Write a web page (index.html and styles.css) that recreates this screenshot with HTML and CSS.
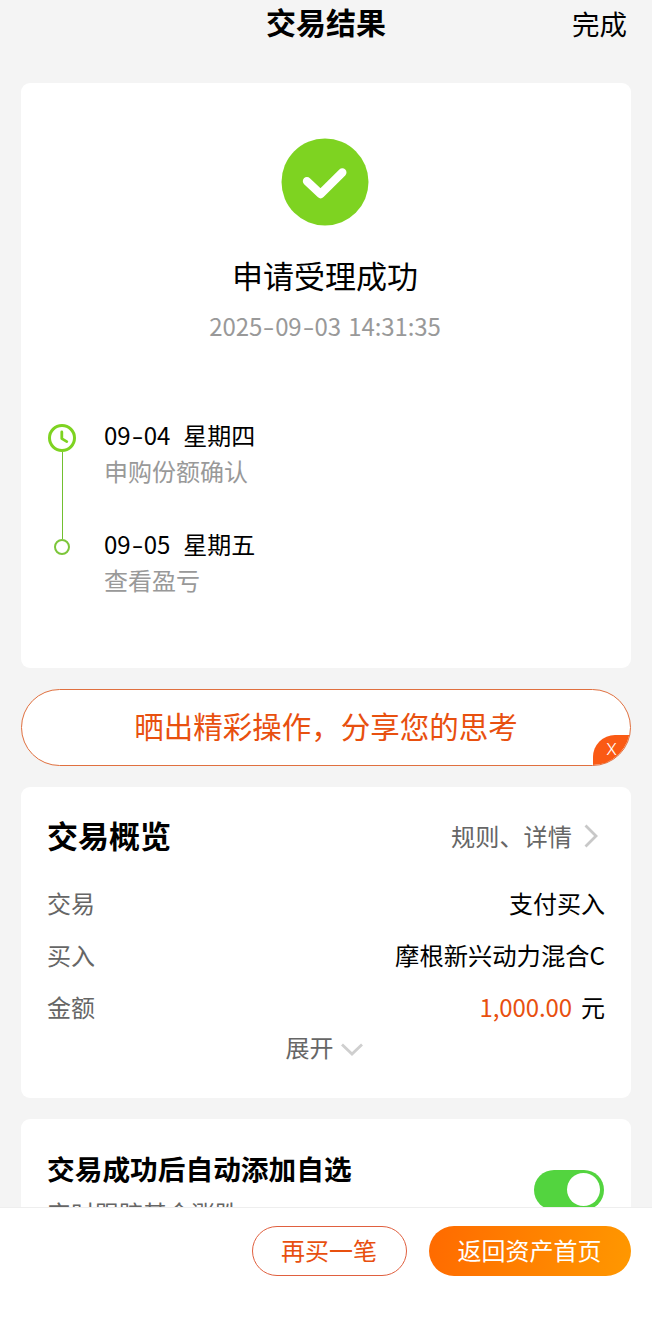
FILE: index.html
```html
<!DOCTYPE html>
<html lang="zh-CN">
<head>
    <meta charset="UTF-8">
    <meta name="viewport" content="width=device-width, initial-scale=1.0">
    <title>交易结果</title>
    <link rel="stylesheet" href="styles.css">
</head>
<body>
    <div class="content">
        <header class="header">
            <span></span>
            <h1 class="header-title">交易结果</h1>
            <a class="header-done">完成</a>
        </header>

        <section class="card result">
            <svg class="result-icon" width="88" height="88" viewBox="0 0 88 88">
                <circle cx="44" cy="44" r="43.5" fill="#7ed321"/>
                <path d="M26 43.2 L39.6 56 L61.3 34.5" fill="none" stroke="#fff" stroke-width="8.4" stroke-linecap="round" stroke-linejoin="round"/>
            </svg>
            <h2 class="result-title">申请受理成功</h2>
            <div class="result-time">2025<i>-</i>09<i>-</i>03 14:31:35</div>

            <div class="timeline">
                <div class="rail">
                    <svg width="28" height="28" viewBox="0 0 28 28" fill="none" stroke="#7ed321">
                        <circle cx="14" cy="14" r="12.5" stroke-width="3"/>
                        <path d="M13.8 8 V14.6 L18.8 17.6" stroke-width="2.8" stroke-linecap="round" stroke-linejoin="round"/>
                    </svg>
                    <div class="rail-line"></div>
                    <div class="rail-dot"></div>
                </div>
                <div class="steps">
                    <div class="step">
                        <div class="step-date">09<i>-</i>04<span>星期四</span></div>
                        <div class="step-desc">申购份额确认</div>
                    </div>
                    <div class="step">
                        <div class="step-date">09<i>-</i>05<span>星期五</span></div>
                        <div class="step-desc">查看盈亏</div>
                    </div>
                </div>
            </div>
        </section>

        <div class="share">
            晒出精彩操作，分享您的思考
            <span class="share-close">X</span>
        </div>

        <section class="card overview">
            <div class="overview-head">
                <h2 class="overview-title">交易概览</h2>
                <a class="overview-link">规则、详情
                    <svg width="14" height="24" viewBox="0 0 14 24" fill="none" stroke="#c8c8c8" stroke-width="2.8">
                        <path d="M1.5 1.5 L12 12 L1.5 22.5"/>
                    </svg>
                </a>
            </div>
            <div class="row">
                <span class="label">交易</span>
                <span>支付买入</span>
            </div>
            <div class="row">
                <span class="label">买入</span>
                <span class="fund">摩根新兴动力混合C</span>
            </div>
            <div class="row">
                <span class="label">金额</span>
                <span><b class="amount">1,000.00</b>元</span>
            </div>
            <div class="expand">展开
                <svg width="22" height="13" viewBox="0 0 22 13" fill="none" stroke="#cfcfcf" stroke-width="2.8">
                    <path d="M1 1.5 L11 11 L21 1.5"/>
                </svg>
            </div>
        </section>

        <section class="card auto">
            <div>
                <h2 class="auto-title">交易成功后自动添加自选</h2>
                <div class="auto-desc">实时跟踪基金涨跌</div>
            </div>
            <div class="switch"></div>
        </section>
    </div>

    <footer class="footer">
        <button class="btn btn-outline">再买一笔</button>
        <button class="btn btn-primary">返回资产首页</button>
    </footer>
</body>
</html>
```
FILE: styles.css
```css
* {
    box-sizing: border-box;
}

body {
    margin: 0;
    height: 1317px;
    display: flex;
    flex-direction: column;
    overflow: hidden;
    background: #f4f4f4;
    color: #000;
    font-family: "Noto Sans CJK SC", sans-serif;
    font-size: 24px;
}

h1, h2 {
    margin: 0;
}

i, b {
    font-style: normal;
    font-weight: normal;
}

.content {
    height: 1207px;
    padding: 0 21px;
    overflow: hidden;
}

.header {
    height: 83px;
    display: grid;
    grid-template-columns: 1fr auto 1fr;
    align-items: start;
}

.header-title {
    font-size: 30px;
    line-height: 43px;
}

.header-done {
    justify-self: end;
    margin-right: 4px;
    font-size: 27.5px;
    line-height: 46px;
}

.card {
    background: #fff;
    border-radius: 9px;
    margin-bottom: 21px;
}

.result {
    height: 585px;
    padding: 55px 28px 0 26px;
    text-align: center;
}

.result-icon {
    display: block;
    margin: 0 auto;
}

.result-title {
    margin-top: 27px;
    font-size: 31px;
    font-weight: 400;
    line-height: 44px;
}

.result-time {
    margin-top: 14px;
    color: #999;
    line-height: 30px;
    letter-spacing: -0.1px;
    word-spacing: 2px;
}

/* wide dash between date parts */
i {
    display: inline-block;
    width: 13px;
    text-align: center;
    transform: scaleX(1.4);
}

.timeline {
    display: flex;
    margin-top: 78px;
    padding-left: 1px;
    text-align: left;
}

.rail {
    width: 28px;
    margin-right: 28px;
    padding-top: 5px;
    display: flex;
    flex-direction: column;
    align-items: center;
}

.rail-line {
    width: 1px;
    height: 87px;
    background: #72bf30;
}

.rail-dot {
    width: 16px;
    height: 16px;
    border: 2px solid #7cc63a;
    border-radius: 50%;
}

.step {
    height: 109px;
}

.step-date {
    line-height: 32px;
}

.step-date span {
    margin-left: 13px;
}

.step-desc {
    margin-top: 2px;
    color: #999;
    line-height: 36px;
}

.share {
    position: relative;
    height: 77px;
    margin-bottom: 21px;
    border: 1px solid #e0703f;
    border-radius: 39px;
    overflow: hidden;
    background: #fff;
    color: #e8500f;
    font-size: 29.5px;
    line-height: 70px;
    text-align: center;
}

.share-close {
    position: absolute;
    right: 0;
    bottom: 0;
    width: 37px;
    height: 30px;
    border-top-left-radius: 22px;
    background: #fa5a14;
    color: #fff;
    font-family: Inter, sans-serif;
    font-weight: 300;
    font-size: 16px;
    line-height: 28px;
}

.overview {
    height: 311px;
    padding: 25px 26px 0;
}

.overview-head {
    height: 65px;
    display: flex;
    justify-content: space-between;
    align-items: flex-start;
}

.overview-title {
    font-size: 31px;
    line-height: 46px;
}

.overview-link {
    display: flex;
    align-items: center;
    gap: 12px;
    margin-right: 7px;
    color: #666;
    font-size: 24.2px;
    line-height: 48px;
}

.row {
    display: flex;
    justify-content: space-between;
    line-height: 52px;
}

.label {
    color: #666;
}

.fund {
    font-size: 24.3px;
}

.amount {
    margin-right: 9px;
    color: #e8500f;
    letter-spacing: -0.1px;
}

.expand {
    display: flex;
    justify-content: center;
    align-items: center;
    gap: 7px;
    padding-right: 4px;
    color: #666;
    line-height: 28px;
}

.expand svg {
    margin-top: 5px;
}

.auto {
    height: 140px;
    padding: 30px 27px 0 26px;
    display: flex;
    justify-content: space-between;
}

.auto-title {
    font-size: 27.7px;
    line-height: 38px;
}

.auto-desc {
    margin-top: 7px;
    color: #666;
    line-height: 37px;
}

.switch {
    width: 70px;
    height: 40px;
    margin-top: 21px;
    padding: 3px 4px;
    border-radius: 20px;
    background: #53d43f;
}

.switch::after {
    content: "";
    display: block;
    width: 33px;
    height: 33px;
    margin-left: auto;
    border-radius: 50%;
    background: #fff;
}

.footer {
    flex: 1;
    display: flex;
    justify-content: flex-end;
    align-items: flex-start;
    gap: 22px;
    padding: 18px 21px 0;
    border-top: 1px solid #eee;
    background: #fff;
}

.btn {
    height: 50px;
    padding: 0 1px 4px 0;
    border: none;
    border-radius: 25px;
    font-family: inherit;
    font-size: 24px;
}

.btn-outline {
    width: 155px;
    border: 1px solid #e0603f;
    background: #fff;
    color: #e8500f;
}

.btn-primary {
    width: 202px;
    background: linear-gradient(100deg, #ff6a00, #ff9800);
    color: #fff;
}
```
